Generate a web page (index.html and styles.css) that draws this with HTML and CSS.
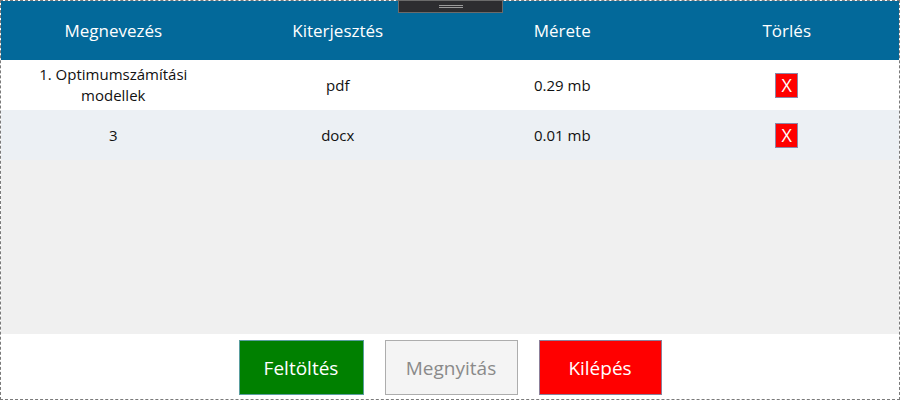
FILE: index.html
```html
<!DOCTYPE html>
<html lang="hu">
<head>
<meta charset="utf-8">
<link rel="stylesheet" href="styles.css">
</head>
<body>
<div class="window">
  <div class="handle"><span class="grip"></span></div>
  <div class="row head">
    <div class="cell">Megnevezés</div>
    <div class="cell">Kiterjesztés</div>
    <div class="cell">Mérete</div>
    <div class="cell">Törlés</div>
  </div>
  <div class="row item">
    <div class="cell">1. Optimumszámítási<br>modellek</div>
    <div class="cell">pdf</div>
    <div class="cell">0.29 mb</div>
    <div class="cell"><button class="del">X</button></div>
  </div>
  <div class="row item alt">
    <div class="cell">3</div>
    <div class="cell">docx</div>
    <div class="cell">0.01 mb</div>
    <div class="cell"><button class="del">X</button></div>
  </div>
  <div class="filler"></div>
  <div class="footer">
    <button class="btn upload">Feltöltés</button>
    <button class="btn open">Megnyitás</button>
    <button class="btn quit">Kilépés</button>
  </div>
</div>
</body>
</html>
```
FILE: styles.css
```css
html, body {
  margin: 0;
  padding: 0;
  background: #ffffff;
}
body {
  font-family: "Open Sans", "Noto Sans", sans-serif;
  color: #111;
}
.window {
  position: relative;
  width: 900px;
  height: 400px;
  box-sizing: border-box;
  border: 1px dashed #7a7a7a;
  display: flex;
  flex-direction: column;
}
.handle {
  position: absolute;
  left: 397px;
  top: -1px;
  width: 105px;
  height: 13px;
  box-sizing: border-box;
  background: #2d2d30;
  border: 1px solid #6b6b6b;
  display: flex;
  justify-content: center;
  align-items: center;
}
.grip {
  width: 24px;
  height: 3px;
  border-top: 1px solid #9a9a9a;
  border-bottom: 1px solid #9a9a9a;
  box-sizing: border-box;
}
.row {
  display: grid;
  grid-template-columns: repeat(4, 1fr);
}
.cell {
  display: flex;
  align-items: center;
  justify-content: center;
  text-align: center;
}
.head {
  height: 59px;
  background: #03699a;
  color: #ffffff;
  font-size: 17px;
}
.item {
  height: 50px;
  font-size: 15px;
  line-height: 21px;
  background: #ffffff;
}
.item.alt {
  background: #ecf0f4;
}
.del {
  width: 23px;
  height: 25px;
  padding: 0;
  margin: 0;
  background: #ff0000;
  color: #ffffff;
  border: 1px solid #8c86a8;
  font-family: "Open Sans", "Noto Sans", sans-serif;
  font-size: 18px;
  line-height: 1;
}
.filler {
  flex: 1;
  background: #f0f0f0;
}
.footer {
  height: 65px;
  box-sizing: border-box;
  padding-top: 6px;
  display: flex;
  justify-content: center;
  align-items: flex-start;
  gap: 21px;
}
.btn {
  height: 55px;
  margin: 0;
  padding: 0;
  font-family: "Open Sans", "Noto Sans", sans-serif;
  font-size: 19px;
  box-sizing: border-box;
}
.upload {
  width: 125px;
  background: #008000;
  color: #ffffff;
  border: 1px solid #5a9e9e;
}
.open {
  width: 133px;
  background: #f4f4f4;
  color: #8a8a8a;
  border: 1px solid #adadad;
}
.quit {
  width: 123px;
  background: #ff0000;
  color: #ffffff;
  border: 1px solid #8c7f99;
}
```
